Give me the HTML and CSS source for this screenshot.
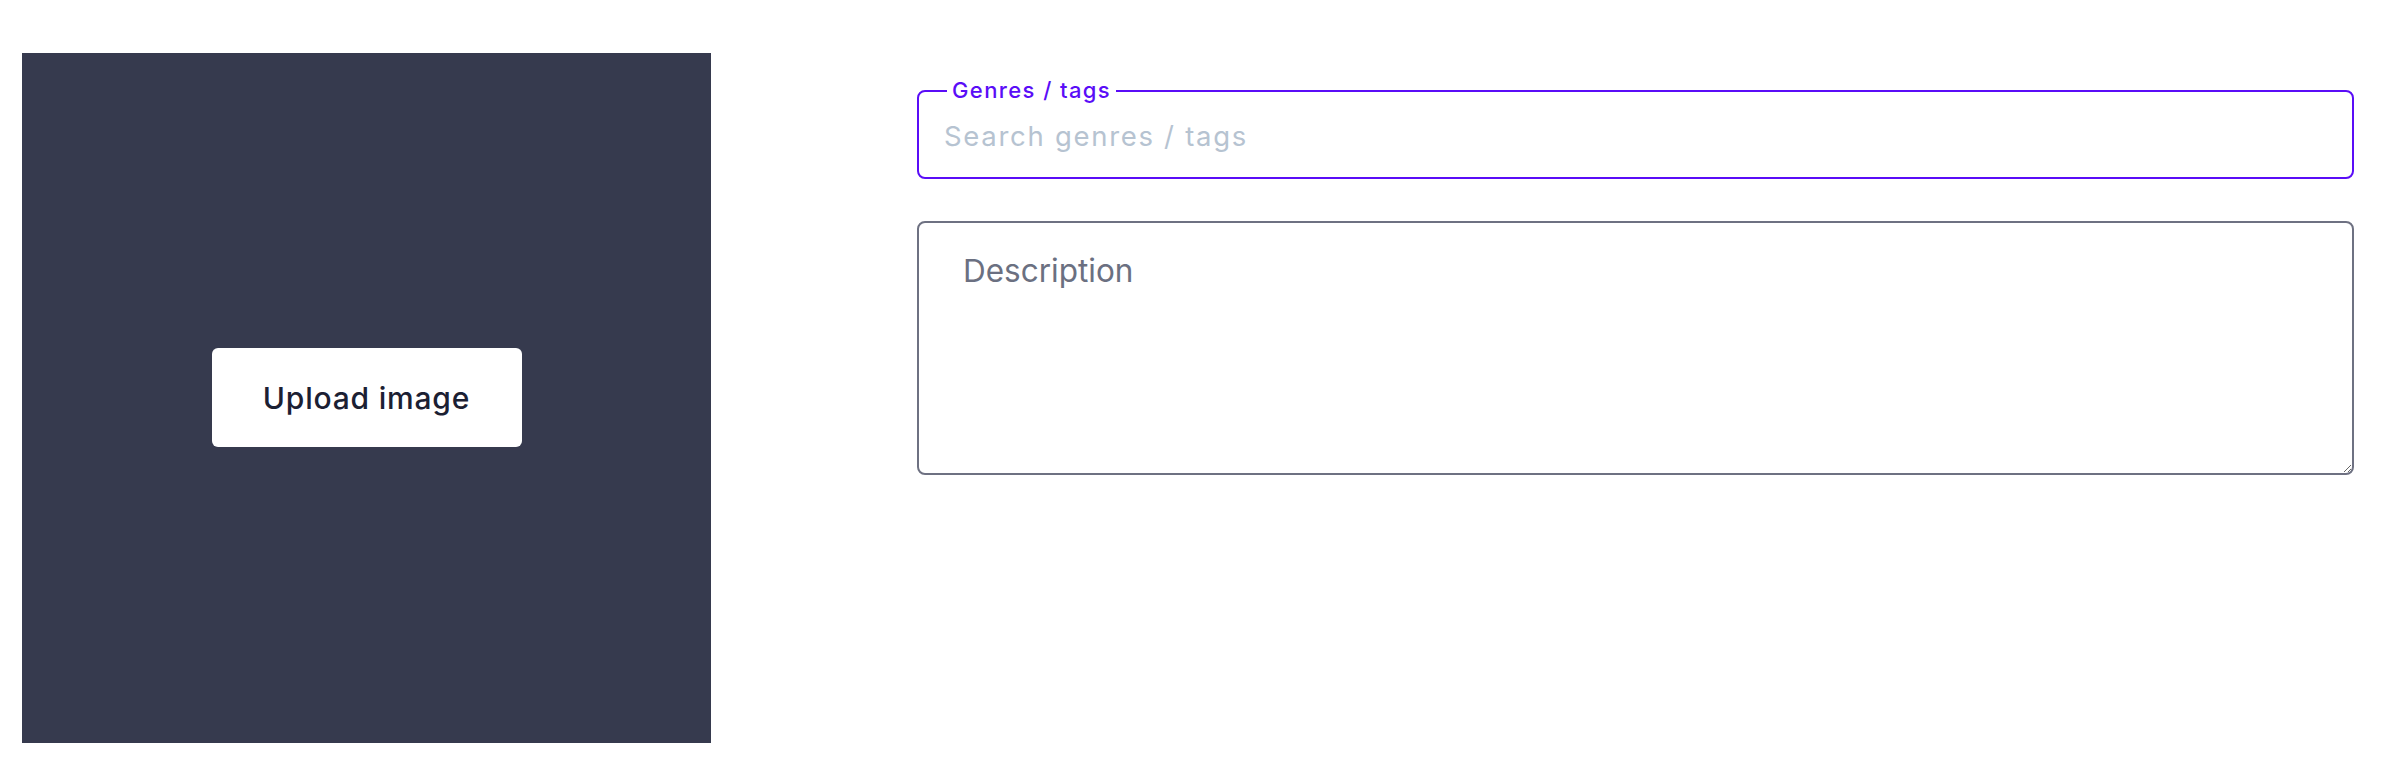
FILE: index.html
```html
<!DOCTYPE html>
<html lang="en">
<head>
<meta charset="utf-8">
<title>Upload</title>
<link rel="stylesheet" href="styles.css">
</head>
<body>
<div class="page">
  <div class="cover">
    <button class="upload-btn" type="button">Upload image</button>
  </div>
  <div class="form">
    <div class="tags-field">
      <label class="tags-label" for="tags">Genres / tags</label>
      <input id="tags" class="tags-input" type="text" placeholder="Search genres / tags">
    </div>
    <textarea class="desc" placeholder="Description"></textarea>
  </div>
</div>
</body>
</html>
```
FILE: styles.css
```css
html, body {
  margin: 0;
  padding: 0;
  background: #ffffff;
}
body {
  font-family: Inter, "DejaVu Sans", sans-serif;
}
.page {
  display: flex;
  align-items: flex-start;
  gap: 206px;
  padding: 53px 32px 0 22px;
}
.cover {
  flex: 0 0 689px;
  height: 690px;
  background: #363a4e;
  display: flex;
  align-items: center;
  justify-content: center;
}
.upload-btn {
  width: 310px;
  height: 99px;
  margin-top: -1px;
  background: #ffffff;
  border: none;
  border-radius: 6px;
  font-family: Inter, "DejaVu Sans", sans-serif;
  font-size: 30px;
  font-weight: 500;
  letter-spacing: 0.8px;
  color: #1b2033;
  padding: 0;
}
.form {
  flex: 1;
  display: flex;
  flex-direction: column;
  gap: 42px;
  margin-top: 37px;
}
.tags-field {
  position: relative;
  height: 89px;
  box-sizing: border-box;
  border: 2px solid #5a0df7;
  border-radius: 8px;
  display: flex;
  align-items: center;
}
.tags-label {
  position: absolute;
  left: 28px;
  top: -16px;
  padding: 0 5px;
  background: #ffffff;
  color: #5a0df7;
  font-size: 22px;
  line-height: 28px;
  font-weight: 500;
  letter-spacing: 1.4px;
}
.tags-input {
  flex: 1;
  border: none;
  outline: none;
  background: transparent;
  padding: 0 0 0 25px;
  margin-top: 2px;
  font-family: Inter, "DejaVu Sans", sans-serif;
  font-size: 27.5px;
  letter-spacing: 1.7px;
  color: #1b2033;
}
.tags-input::placeholder {
  color: #b6c3d1;
}
.desc {
  display: block;
  height: 254px;
  box-sizing: border-box;
  border: 2px solid #6e7182;
  border-radius: 8px;
  padding: 29px 44px;
  font-family: Inter, "DejaVu Sans", sans-serif;
  font-size: 31.5px;
  line-height: 1.21;
  color: #1b2033;
  outline: none;
  resize: vertical;
}
.desc::placeholder {
  color: #6b7081;
}
```
